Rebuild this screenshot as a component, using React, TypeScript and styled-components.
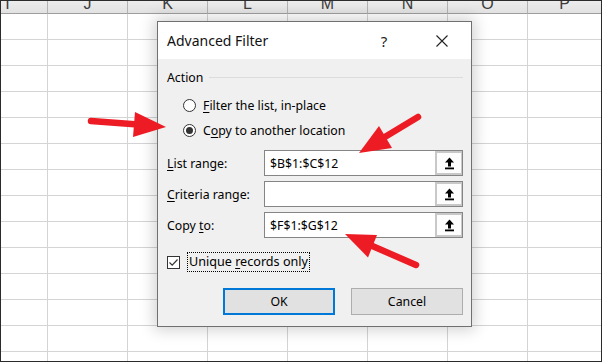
import React from "react";
import styled, { createGlobalStyle } from "styled-components";

const GlobalStyle = createGlobalStyle`
  html, body { margin: 0; padding: 0; background: #fff; }
  body { font-family: "Noto Sans", "DejaVu Sans", sans-serif; }
  * { box-sizing: border-box; }
`;

const Frame = styled.div`
  position: relative;
  width: 602px;
  height: 362px;
  border: 1px solid #2b2b2b;
  overflow: hidden;
  background: #fff;
`;

const Sheet = styled.div`
  display: grid;
  margin-left: -33px;
  grid-template-columns: repeat(7, 80px) 1fr;
  grid-template-rows: 13px repeat(14, 26px);
`;

const HeaderCell = styled.div<{ $last?: boolean }>`
  background: linear-gradient(#ececec, #e2e2e2);
  border-bottom: 1px solid #9e9e9e;
  border-right: ${(p) => (p.$last ? "none" : "1px solid #b3b3b3")};
  overflow: hidden;
  text-align: center;
  font-family: "Liberation Sans", Arial, sans-serif;
  font-size: 16px;
  color: #3c3c3c;
`;

const HeaderLetter = styled.span<{ $shift?: number }>`
  display: block;
  line-height: 16px;
  margin-top: -5px;
`;

const Cell = styled.div<{ $last?: boolean }>`
  border-bottom: 1px solid #d4d4d4;
  border-right: ${(p) => (p.$last ? "none" : "1px solid #d4d4d4")};
`;

const Dialog = styled.div`
  position: absolute;
  left: 156px;
  top: 20px;
  width: 315px;
  height: 306px;
  border: 1px solid #707070;
  background: #f0f0f0;
  box-shadow: 0 0 14px 3px rgba(0, 0, 0, 0.18);
  display: flex;
  flex-direction: column;
  font-size: 12.3px;
  color: #000;
`;

const TitleBar = styled.div`
  height: 37px;
  background: #fff;
  display: flex;
  align-items: center;
  padding-left: 9px;
`;

const TitleText = styled.div`
  flex: 1;
  font-size: 14px;
  color: #111;
`;

const TitleButton = styled.div`
  width: 58px;
  height: 100%;
  display: flex;
  align-items: center;
  justify-content: center;
  font-size: 15px;
  color: #222;
`;

const Body = styled.div`
  flex: 1;
  display: flex;
  flex-direction: column;
  padding: 10px 8px 10px 9px;
`;

const GroupHeader = styled.div`
  height: 16px;
  display: flex;
  align-items: center;
  gap: 6px;
`;

const GroupRule = styled.div`
  flex: 1;
  height: 1px;
  background: #dcdcdc;
`;

const RadioList = styled.div`
  display: flex;
  flex-direction: column;
  gap: 5px;
  margin: 10px 0 0 16px;
`;

const OptionRow = styled.div`
  height: 20px;
  display: flex;
  align-items: center;
  gap: 7px;
`;

const RadioCircle = styled.span<{ $checked?: boolean }>`
  width: 13px;
  height: 13px;
  border-radius: 50%;
  border: 1px solid #333;
  background: #fff;
  display: flex;
  align-items: center;
  justify-content: center;
  &::after {
    content: "";
    width: 7px;
    height: 7px;
    border-radius: 50%;
    background: ${(p) => (p.$checked ? "#333" : "transparent")};
  }
`;

const Mn = styled.span`
  text-decoration: underline;
  text-underline-offset: 2px;
  text-decoration-thickness: 1px;
`;

const Fields = styled.div`
  display: flex;
  flex-direction: column;
  gap: 5px;
  margin-top: 10px;
`;

const FieldRow = styled.div`
  height: 26px;
  display: flex;
  align-items: center;
`;

const FieldLabel = styled.div`
  width: 97px;
`;

const InputBox = styled.div`
  flex: 1;
  height: 100%;
  border: 1px solid #858585;
  background: #fff;
  display: flex;
  align-items: center;
`;

const InputText = styled.div`
  flex: 1;
  padding-left: 5px;
`;

const PickButton = styled.div`
  width: 27px;
  height: 100%;
  border: 2px solid #c8c8c8;
  border-right-width: 1px;
  background: #fdfdfd;
  display: flex;
  align-items: center;
  justify-content: center;
`;

const CheckRow = styled.div`
  height: 20px;
  display: flex;
  align-items: center;
  gap: 7px;
  margin-top: 14px;
`;

const CheckBox = styled.span`
  width: 13px;
  height: 13px;
  border: 1px solid #333;
  background: #fff;
  display: flex;
  align-items: center;
  justify-content: center;
`;

const FocusText = styled.span`
  border: 1px dotted #000;
  padding: 0 1px;
  line-height: 18px;
  font-size: 12.6px;
`;

const ButtonRow = styled.div`
  display: flex;
  justify-content: flex-end;
  gap: 16px;
  margin-top: 16px;
`;

const DlgButton = styled.div<{ $default?: boolean }>`
  width: 112px;
  height: 27px;
  background: #e1e1e1;
  border: ${(p) => (p.$default ? "2px solid #0078d7" : "1px solid #adadad")};
  display: flex;
  align-items: center;
  justify-content: center;
`;

const Overlay = styled.svg`
  position: absolute;
  left: -1px;
  top: -1px;
  width: 602px;
  height: 362px;
  pointer-events: none;
`;

const cols = ["I", "J", "K", "L", "M", "N", "O", "P"];

const PickIcon = () => (
  <svg width="11" height="13" viewBox="0 0 11 13">
    <polygon points="5.5,0.5 10,5.5 1,5.5" fill="#000" />
    <rect x="4" y="5" width="3" height="4.5" fill="#000" />
    <rect x="1" y="10.5" width="9" height="1.8" fill="#000" />
  </svg>
);

const Field = ({ label, value }: { label: React.ReactNode; value: string }) => (
  <FieldRow>
    <FieldLabel>{label}</FieldLabel>
    <InputBox>
      <InputText>{value}</InputText>
      <PickButton>
        <PickIcon />
      </PickButton>
    </InputBox>
  </FieldRow>
);

const RED = "#ed1c24";

export default function App() {
  return (
    <>
      <GlobalStyle />
      <Frame>
        <Sheet>
          {cols.map((c, i) => (
            <HeaderCell key={c} $last={i === cols.length - 1}>
              <HeaderLetter>{c}</HeaderLetter>
            </HeaderCell>
          ))}
          {Array.from({ length: 14 * cols.length }).map((_, i) => (
            <Cell key={i} $last={i % cols.length === cols.length - 1} />
          ))}
        </Sheet>

        <Dialog>
          <TitleBar>
            <TitleText>Advanced Filter</TitleText>
            <TitleButton>?</TitleButton>
            <TitleButton>
              <svg width="12" height="12" viewBox="0 0 12 12">
                <path d="M0.5 0.5 L11.5 11.5 M11.5 0.5 L0.5 11.5" stroke="#222" strokeWidth="1.1" />
              </svg>
            </TitleButton>
          </TitleBar>
          <Body>
            <GroupHeader>
              <span>Action</span>
              <GroupRule />
            </GroupHeader>
            <RadioList>
              <OptionRow>
                <RadioCircle />
                <span>
                  <Mn>F</Mn>ilter the list, in-place
                </span>
              </OptionRow>
              <OptionRow>
                <RadioCircle $checked />
                <span>
                  C<Mn>o</Mn>py to another location
                </span>
              </OptionRow>
            </RadioList>
            <Fields>
              <Field label={<><Mn>L</Mn>ist range:</>} value="$B$1:$C$12" />
              <Field label={<><Mn>C</Mn>riteria range:</>} value="" />
              <Field label={<>Copy <Mn>t</Mn>o:</>} value="$F$1:$G$12" />
            </Fields>
            <CheckRow>
              <CheckBox>
                <svg width="11" height="11" viewBox="0 0 11 11">
                  <path d="M1.5 5.5 L4.2 8.2 L9.5 2.5" fill="none" stroke="#333" strokeWidth="1.2" />
                </svg>
              </CheckBox>
              <FocusText>
                Unique <Mn>r</Mn>ecords only
              </FocusText>
            </CheckRow>
            <ButtonRow>
              <DlgButton $default>OK</DlgButton>
              <DlgButton>Cancel</DlgButton>
            </ButtonRow>
          </Body>
        </Dialog>

        <Overlay viewBox="0 0 602 362">
          <line x1="91" y1="121" x2="138" y2="124.5" stroke={RED} strokeWidth="6.5" strokeLinecap="round" />
          <polygon points="135,112 133,137 166,127" fill={RED} />
          <line x1="418" y1="117" x2="384" y2="137.5" stroke={RED} strokeWidth="6.5" strokeLinecap="round" />
          <polygon points="379,126 392,148 359,153" fill={RED} />
          <line x1="416" y1="265" x2="370" y2="245" stroke={RED} strokeWidth="6.5" strokeLinecap="round" />
          <polygon points="377,235 368,257.5 345,234" fill={RED} />
        </Overlay>
      </Frame>
    </>
  );
}
